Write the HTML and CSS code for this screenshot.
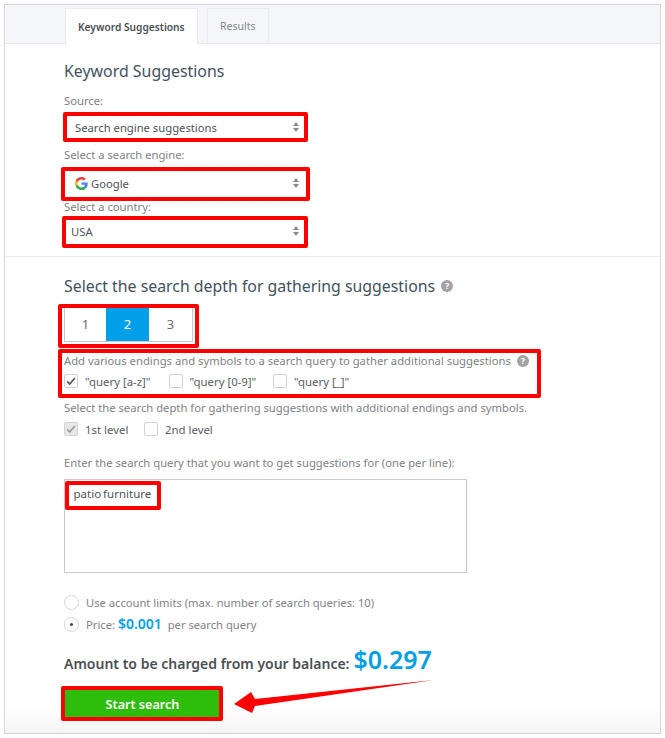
FILE: index.html
```html
<!DOCTYPE html>
<html lang="en">
<head>
<meta charset="utf-8">
<title>Keyword Suggestions</title>
<link rel="stylesheet" href="styles.css">
</head>
<body>
<main class="panel">
  <nav class="tabs">
    <a class="tab active">Keyword Suggestions</a>
    <a class="tab">Results</a>
  </nav>
  <section class="top">
    <h1>Keyword Suggestions</h1>
    <label class="lbl l-source">Source:</label>
    <div class="select s-source"><span>Search engine suggestions</span><i class="updown"></i></div>
    <label class="lbl l-engine">Select a search engine:</label>
    <div class="select s-engine"><span class="g-row"><svg class="g" viewBox="0 0 48 48"><path fill="#ea4335" d="M24 9.500c3.500 0 6.700 1.300 9.100 3.500l6.800-6.800C35.800 2.400 30.200 0 24 0 14.600 0 6.500 5.400 2.600 13.200l7.900 6.100C12.400 13.600 17.700 9.500 24 9.500z"/><path fill="#4285f4" d="M46.900 24.500c0-1.600-.1-3.100-.4-4.500H24v9h12.900c-.6 3-2.200 5.500-4.700 7.200l7.700 6c4.500-4.200 7-10.300 7-17.700z"/><path fill="#fbbc05" d="M10.500 28.700c-.5-1.400-.8-3-.8-4.700s.3-3.200.8-4.700l-7.900-6.100C.9 16.500 0 20.100 0 24s.9 7.500 2.600 10.800l7.900-6.100z"/><path fill="#34a853" d="M24 48c6.500 0 11.900-2.100 15.900-5.800l-7.700-6c-2.200 1.400-4.900 2.300-8.200 2.300-6.300 0-11.600-4.200-13.500-9.800l-7.900 6.100C6.500 42.600 14.600 48 24 48z"/></svg>Google</span><i class="updown"></i></div>
    <label class="lbl l-country">Select a country:</label>
    <div class="select s-country"><span>USA</span><i class="updown"></i></div>
  </section>
  <section class="bottom">
    <h2>Select the search depth for gathering suggestions <i class="help big">?</i></h2>
    <div class="depth"><span>1</span><span class="on">2</span><span>3</span></div>
    <p class="lbl add">Add various endings and symbols to a search query to gather additional suggestions <i class="help">?</i></p>
    <div class="checks c-first">
      <span class="chk"><i class="box"><svg viewBox="0 0 14 14"><path d="M2.500 7.500 5.500 10.500 11.500 3.500"/></svg></i>"query [a-z]"</span>
      <span class="chk"><i class="box"></i>"query [0-9]"</span>
      <span class="chk"><i class="box"></i>"query [_]"</span>
    </div>
    <p class="lbl sel">Select the search depth for gathering suggestions with additional endings and symbols.</p>
    <div class="checks c-second">
      <span class="chk"><i class="box off"><svg viewBox="0 0 14 14"><path d="M2.500 7.500 5.500 10.500 11.500 3.500"/></svg></i>1st level</span>
      <span class="chk"><i class="box"></i>2nd level</span>
    </div>
    <p class="lbl enter">Enter the search query that you want to get suggestions for (one per line):</p>
    <div class="query">patio furniture</div>
    <div class="radio r-one"><i class="dot"></i>Use account limits (max. number of search queries: 10)</div>
    <div class="radio r-two"><i class="dot sel-dot"></i><span>Price: <b class="price">$0.001</b> per search query</span></div>
    <div class="amount">Amount to be charged from your balance: <b>$0.297</b></div>
    <button class="start">Start search</button>
  </section>
  <div class="mark m1"></div>
  <div class="mark m2"></div>
  <div class="mark m3"></div>
  <div class="mark m4"></div>
  <div class="mark m5"></div>
  <div class="mark m6"></div>
  <div class="mark m7"></div>
  <svg class="arrow" viewBox="0 0 210 40"><path d="M203 0 24 19 20 12 3 24 21 33 24 26z"/></svg>
</main>
</body>
</html>
```
FILE: styles.css
```css
* { box-sizing: border-box; }
html, body { margin: 0; padding: 0; }
body { width: 665px; height: 738px; background: #fff; font-family: "Noto Sans", "Open Sans", sans-serif; color: #7a7d80; overflow: hidden; padding: 4px; }
.panel { position: relative; width: 657px; height: 730px; border: 1px solid #d9d9d9; border-top-color: #d4d4d4; border-bottom: 1px solid #cfcfcf; background: linear-gradient(to bottom, #fff 0, #fff 96%, #f5f5f5 100%); }
.tabs { display: flex; height: 39px; padding: 3px 0 0 60px; gap: 9px; background: #f4f6fa; border-bottom: 1px solid #e6e8ec; }
.tab { height: 36px; padding: 0 12.500px; font-size: 10.500px; line-height: 35px; font-weight: 400; color: #85888c; border: 1px solid #e9ebef; border-bottom: 0; }
.tab.active { background: #fff; color: #4a4f55; font-weight: 600; font-size: 10.200px; height: 37px; line-height: 36px; padding: 0 12px; }
.top { padding: 0 0 0 59px; height: 213px; border-bottom: 1px solid #ebebeb; }
h1 { margin: 0; padding-top: 16px; font-size: 15.900px; line-height: 22px; font-weight: 400; color: #43525f; }
.lbl { display: block; font-size: 11.250px; line-height: 16px; color: #7f8285; margin: 0; }
.l-source { margin-top: 11px; }
.l-engine { margin-top: 5px; }
.l-country { margin-top: 1px; }
.select { display: flex; justify-content: space-between; align-items: center; width: 240px; font-size: 11.250px; color: #4f5357; padding: 0 5px 0 11px; }
.s-source { height: 30px; margin-top: 3px; }
.s-engine { height: 30px; margin-top: 5px; }
.s-country { height: 30px; margin-top: 1px; padding-left: 7px; }
.g-row { display: flex; align-items: center; gap: 3px; }
.g { width: 13px; height: 13px; }
.updown { display: block; width: 6px; height: 10px; position: relative; }
.updown::before, .updown::after { content: ""; position: absolute; left: 0; border-left: 3px solid transparent; border-right: 3px solid transparent; }
.updown::before { top: 0; border-bottom: 4px solid #8a8a8a; }
.updown::after { bottom: 0; border-top: 4px solid #8a8a8a; }
.bottom { padding: 0 0 0 59px; }
h2 { margin: 0; padding-top: 18px; font-size: 15.850px; line-height: 22px; font-weight: 400; color: #43525f; display: flex; align-items: center; gap: 6px; }
.help { display: inline-flex; width: 12px; height: 12px; border-radius: 50%; background: #a3a3a3; color: #fff; font-size: 9px; font-weight: 700; font-style: normal; align-items: center; justify-content: center; }
.depth { display: flex; width: 129px; height: 36px; margin-top: 9px; border: 1px solid #c9c9c9; }
.depth span { flex: none; width: 43px; display: flex; align-items: center; justify-content: center; font-size: 13px; color: #6a6d70; }
.depth span:first-child { width: 41px; }
.depth .on { background: #009fe8; color: #fff; width: 43px; }
.add { margin-top: 11px; display: flex; align-items: center; gap: 6px; }
.checks { display: flex; height: 20px; margin-top: 2px; font-size: 11.400px; color: #5b5e62; align-items: center; }
.chk { display: flex; align-items: center; gap: 7px; }
.c-first .chk { width: 104.500px; }
.c-second .chk { width: 80px; }
.box { display: block; width: 14px; height: 14px; border: 1px solid #d2d2d2; border-radius: 2px; flex: none; }
.box svg { display: block; width: 12px; height: 12px; fill: none; stroke: #555; stroke-width: 2; }
.box.off { background: #e8e8e8; }
.box.off svg { stroke: #9a9a9a; }
.sel { margin-top: 9px; }
.c-second { margin-top: 3px; }
.enter { margin-top: 16px; }
.query { width: 403px; height: 94px; margin-top: 8px; border: 1px solid #c9c9c9; padding: 6px 8.500px; font-size: 11.500px; line-height: 16px; color: #4f5357; word-spacing: -1px; }
.radio { display: flex; align-items: center; gap: 7px; font-size: 11.200px; line-height: 20px; height: 21px; color: #7f8285; }
.r-one { margin-top: 19px; }
.r-two { margin-top: 1px; }
.dot { display: block; width: 15px; height: 15px; border: 1px solid #d6d6d6; border-radius: 50%; flex: none; position: relative; }
.sel-dot::after { content: ""; position: absolute; left: 5px; top: 5px; width: 3px; height: 3px; border-radius: 50%; background: #444; }
.price { color: #009fe8; font-size: 14px; font-weight: 600; margin: 0 3px 0 0; }
.amount { display: flex; align-items: baseline; gap: 4px; margin-top: 5px; height: 38px; font-size: 14px; font-weight: 600; color: #4a4f55; }
.amount b { color: #009fe8; font-size: 25px; font-weight: 600; line-height: 38px; }
.start { display: block; width: 155px; height: 28px; margin-top: 12px; margin-left: 1px; border: 0; background: #2fbd0c; color: #fff; font: 600 12.600px "Noto Sans", "Open Sans", sans-serif; }
.mark { position: absolute; border: 4px solid #f00; border-radius: 2px; pointer-events: none; }
.m1 { left: 58px; top: 107px; width: 245px; height: 30px; }
.m2 { left: 56px; top: 162px; width: 249px; height: 34px; }
.m3 { left: 57px; top: 211px; width: 246px; height: 32px; }
.m4 { left: 53px; top: 299px; width: 141px; height: 44px; }
.m5 { left: 53px; top: 344px; width: 483px; height: 49px; }
.m6 { left: 60px; top: 476px; width: 96px; height: 29px; }
.m7 { left: 56px; top: 681px; width: 162px; height: 35px; }
.arrow { position: absolute; left: 226px; top: 675px; width: 210px; height: 40px; fill: #f00; }
```
